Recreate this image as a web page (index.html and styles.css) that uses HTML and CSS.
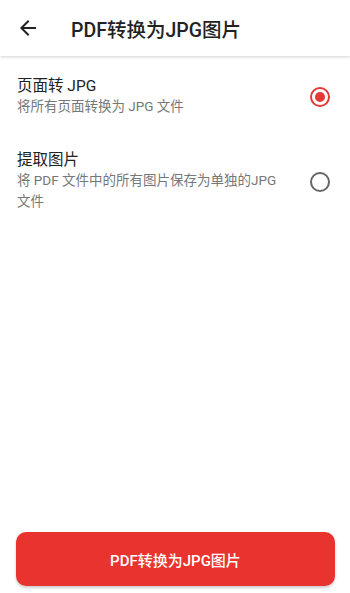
FILE: index.html
```html
<!DOCTYPE html>
<html>
<head>
<meta charset="utf-8">
<title>PDF转换为JPG图片</title>
<link rel="stylesheet" href="styles.css">
</head>
<body>
<div class="app">
<div class="header">
<svg class="back" width="24" height="24" viewBox="0 0 24 24"><path d="M20 11H7.83l5.59-5.59L12 4l-8 8 8 8 1.41-1.41L7.83 13H20v-2z" fill="#222"/></svg>
<div class="title">PDF转换为JPG图片</div>
</div>
<div class="list">
<div class="option">
<div class="text">
<div class="name">页面转 JPG</div>
<div class="desc">将所有页面转换为 JPG 文件</div>
</div>
<div class="radio on"></div>
</div>
<div class="option">
<div class="text">
<div class="name">提取图片</div>
<div class="desc">将 PDF 文件中的所有图片保存为单独的JPG文件</div>
</div>
<div class="radio"></div>
</div>
</div>
<div class="footer">
<button class="btn">PDF转换为JPG图片</button>
</div>
</div>
</body>
</html>
```
FILE: styles.css
```css
html,body{margin:0;padding:0;background:#fff}
body{font-family:Roboto,"Noto Sans CJK SC",sans-serif;color:#222}
.app{display:flex;flex-direction:column;height:593px}
.header{display:flex;align-items:center;height:56px;box-shadow:0 1px 3px rgba(0,0,0,0.18);position:relative;z-index:1}
.back{margin-left:16px;margin-right:31px}
.title{font-size:19.5px;font-weight:500;color:#222}
.list{flex:1;padding-top:21px}
.option{display:flex;align-items:center;padding:0 20px 0 17px;margin-bottom:34px}
.text{flex:1;padding-right:28px}
.name{font-size:15.5px;line-height:19px;color:#222}
.desc{font-size:13.5px;line-height:21px;color:#777}
.radio{width:16px;height:16px;border:2px solid #666;border-radius:50%;box-sizing:content-box;position:relative}
.radio.on{border-color:#e53935}
.radio.on::after{content:"";position:absolute;left:3px;top:3px;width:10px;height:10px;border-radius:50%;background:#e53935}
.footer{padding:0 15px 7px 16px}
.btn{width:100%;height:54px;border:none;border-radius:10px;background:#e8332f;color:#fff;font-family:Roboto,"Noto Sans CJK SC",sans-serif;font-size:15px;font-weight:500;box-shadow:0 2px 3px rgba(0,0,0,0.2)}
```
